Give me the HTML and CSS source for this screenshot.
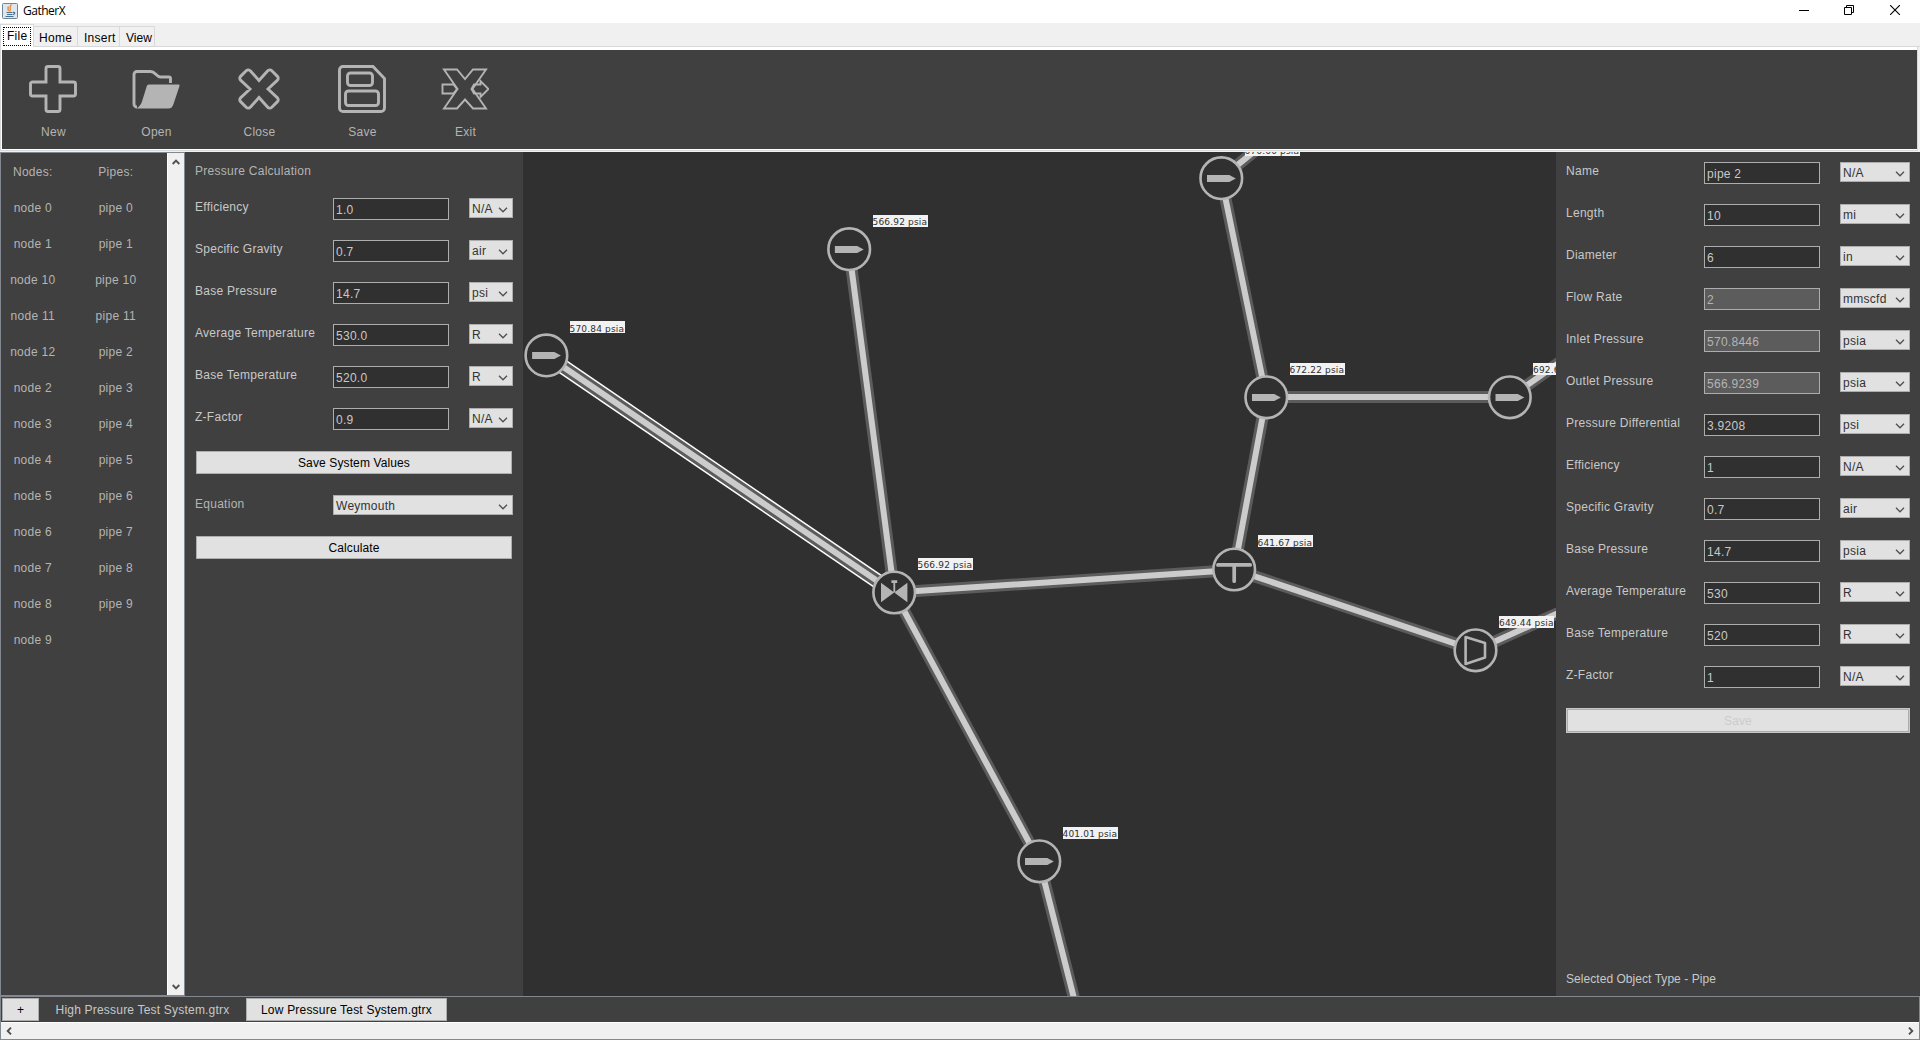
FILE: index.html
```html
<!DOCTYPE html>
<html lang="en">
<head>
<meta charset="utf-8">
<title>GatherX</title>
<link rel="stylesheet" href="styles.css">
</head>
<body>
<svg class="defs" width="0" height="0">
  <defs>
    <symbol id="chev" viewBox="0 0 10 6"><path d="M1 .8 5 4.8 9 .8" fill="none" stroke="#505050" stroke-width="1.3"/></symbol>
    <g id="source">
      <circle r="20.8" fill="#303030" stroke="#b4b4b4" stroke-width="2.6"/>
      <path d="M-14.3-3.3H8L14.5.2 8 3.7H-14.3Z" fill="#b4b4b4"/>
    </g>
  </defs>
</svg>
<header class="titlebar">
  <svg class="java" width="16" height="16" viewBox="0 0 16 16">
    <rect x=".5" y=".5" width="15" height="15" rx="1" fill="#dfe6ee" stroke="#6f8596"/>
    <path d="M9.5 1.5C6 4.500 10 5 7.500 8.500M6.500 3.500C5 5.500 7 6 6 8" fill="none" stroke="#e8852a" stroke-width="1.300"/>
    <path d="M4.500 9.500h6M5 11.500h5M3.500 13.500h8M11 9.500c2.500-.5 2 2-.5 2" fill="none" stroke="#49708f" stroke-width="1.200"/>
  </svg>
  <span class="app-name">GatherX</span>
  <div class="win-buttons">
    <svg width="10" height="10" viewBox="0 0 10 10"><path d="M0 5.500h10" stroke="#000"/></svg>
    <svg width="10" height="10" viewBox="0 0 10 10"><path d="M.5 2.500h7v7h-7zM2.500 2.500v-2h7v7h-2" fill="none" stroke="#000"/></svg>
    <svg class="close" width="10" height="10" viewBox="0 0 10 10"><path d="M0 0 10 10M10 0 0 10" stroke="#000" stroke-width="1.100"/></svg>
  </div>
</header>
<nav class="menu">
  <div class="tab active"><span>File</span></div>
  <div class="tab home">Home</div>
  <div class="tab insert">Insert</div>
  <div class="tab view">View</div>
</nav>
<section class="ribbon">
  <div class="tools">
    <div class="tool">
      <svg width="48" height="48" viewBox="0 0 48 48"><path d="M19 1.500h10a2 2 0 0 1 2 2V17h13.500a2 2 0 0 1 2 2v10a2 2 0 0 1-2 2H31v13.500a2 2 0 0 1-2 2H19a2 2 0 0 1-2-2V31H3.500a2 2 0 0 1-2-2V19a2 2 0 0 1 2-2H17V3.500a2 2 0 0 1 2-2Z"/></svg>
      <span>New</span>
    </div>
    <div class="tool">
      <svg width="48" height="48" viewBox="0 0 48 48"><path d="M38.500 18v-4.500a1.500 1.500 0 0 0-1.500-1.500H28.500C24 12 23.500 6.500 18.500 6.500H5a3 3 0 0 0-3 3V39a3 3 0 0 0 3 3"/><path class="solid" d="M17 19.500h29.500c.8 0 1.300.7 1 1.500L41.500 39c-1 3-2.500 4.500-5 4.500H4.500C7 42 9 39.500 10 36.500L14.500 22c.5-1.800 1.200-2.500 2.500-2.500Z"/></svg>
      <span>Open</span>
    </div>
    <div class="tool">
      <svg width="48" height="48" viewBox="0 0 48 48"><path d="M24 15.500 32.500 6c1.300-1.500 3-1.500 4.300-.3l5.400 5.400c1.400 1.400 1.400 3 0 4.300L33 24l9.200 8.600c1.400 1.300 1.400 2.900 0 4.300l-5.400 5.400c-1.300 1.200-3 1.200-4.300-.3L24 32.500 15.500 42c-1.300 1.500-3 1.500-4.300.3l-5.400-5.400c-1.400-1.400-1.400-3 0-4.300L15 24l-9.200-8.600c-1.400-1.300-1.400-2.900 0-4.300l5.400-5.400c1.300-1.200 3-1.200 4.300.3Z"/></svg>
      <span>Close</span>
    </div>
    <div class="tool">
      <svg width="48" height="48" viewBox="0 0 48 48"><path d="M5 1.500h30L46.500 13.500V43a3.500 3.500 0 0 1-3.500 3.500H5A3.500 3.500 0 0 1 1.500 43V5A3.500 3.500 0 0 1 5 1.500Z"/><rect x="9.500" y="8" width="25" height="12.500" rx="3"/><rect x="7.500" y="26" width="33" height="14.500" rx="3"/></svg>
      <span>Save</span>
    </div>
    <div class="tool">
      <svg class="thin" width="48" height="48" viewBox="0 0 48 48"><path d="M3 4.500H16L24 14 32 4.500H45L31.500 24 45 43.500H32L24 34.500 16 43.500H3L16.500 24Z"/><path d="M12.500 19.500H1.500v9h11l3.500-4.500Z"/><path d="M33 19.500h6.500v-3.500l8 8-8 8v-3.500H33L30.500 24Z"/></svg>
      <span>Exit</span>
    </div>
  </div>
</section>
<main class="work">
  <aside class="objects">
    <div class="lists">
      <div class="list nodes">
        <span>Nodes:</span><span>node 0</span><span>node 1</span><span>node 10</span><span>node 11</span><span>node 12</span><span>node 2</span><span>node 3</span><span>node 4</span><span>node 5</span><span>node 6</span><span>node 7</span><span>node 8</span><span>node 9</span>
      </div>
      <div class="list pipes">
        <span>Pipes:</span><span>pipe 0</span><span>pipe 1</span><span>pipe 10</span><span>pipe 11</span><span>pipe 2</span><span>pipe 3</span><span>pipe 4</span><span>pipe 5</span><span>pipe 6</span><span>pipe 7</span><span>pipe 8</span><span>pipe 9</span>
      </div>
    </div>
    <div class="vscroll">
      <svg width="8" height="6" viewBox="0 0 8 6"><path d="M.7 5 4 1.700 7.300 5" fill="none" stroke="#505050" stroke-width="1.900"/></svg>
      <svg width="8" height="6" viewBox="0 0 8 6"><path d="M.7 1 4 4.300 7.300 1" fill="none" stroke="#505050" stroke-width="1.900"/></svg>
    </div>
  </aside>
  <section class="calc">
    <h2>Pressure Calculation</h2>
    <div class="row"><label>Efficiency</label><div class="field">1.0</div><div class="select">N/A<svg><use href="#chev"/></svg></div></div>
    <div class="row"><label>Specific Gravity</label><div class="field">0.7</div><div class="select">air<svg><use href="#chev"/></svg></div></div>
    <div class="row"><label>Base Pressure</label><div class="field">14.7</div><div class="select">psi<svg><use href="#chev"/></svg></div></div>
    <div class="row"><label>Average Temperature</label><div class="field">530.0</div><div class="select">R<svg><use href="#chev"/></svg></div></div>
    <div class="row"><label>Base Temperature</label><div class="field">520.0</div><div class="select">R<svg><use href="#chev"/></svg></div></div>
    <div class="row"><label>Z-Factor</label><div class="field">0.9</div><div class="select">N/A<svg><use href="#chev"/></svg></div></div>
    <div class="button save-values">Save System Values</div>
    <div class="row equation"><label>Equation</label><div class="select">Weymouth<svg><use href="#chev"/></svg></div></div>
    <div class="button">Calculate</div>
  </section>
  <svg class="canvas" width="1033" height="844" viewBox="523 152 1033 844">
    <g>
      <path class="halo" d="M546.500 355.500 894.200 592.500"/>
      <g class="casing">
        <path id="network" d="M546.500 355.500 894.200 592.500M849 249.300 894.200 592.500M894.200 592.500 1234.200 570M894.200 592.500 1039.300 861.300M1039.300 861.300 1079.500 1020M1234.200 569.500 1266.300 397M1234.200 569.500 1475.500 650.300M1475.500 650.300 1596 596M1266.300 397 1221.300 178.200M1266 397H1510M1221.300 178.200 1293 120M1509.800 397.300 1610 327"/>
      </g>
      <use class="core" href="#network"/>
    </g>
    <use href="#source" x="546.400" y="355.400"/>
    <use href="#source" x="849.200" y="249.200"/>
    <use href="#source" x="1221.300" y="178.200"/>
    <use href="#source" x="1266.300" y="397.300"/>
    <use href="#source" x="1509.800" y="397.300"/>
    <use href="#source" x="1039.300" y="861.300"/>
    <g class="node" transform="translate(894.200 592.500)">
      <circle r="20.800"/>
      <path class="fill" d="M-13.200-9.700 0 0-13.200 9.700ZM13.200-9.700 0 0 13.200 9.700ZM-2.800-12.300H3v2.800H1V0H-.8V-9.500H-2.800Z"/>
    </g>
    <g class="node" transform="translate(1234.200 569.500)">
      <circle r="20.800"/>
      <path d="M-16.300-4.600H16M0-4.600V11.700" stroke-linecap="round" stroke-width="3.700"/>
    </g>
    <g class="node" transform="translate(1475.500 650.300)">
      <circle r="20.800"/>
      <path d="M-9.900-13.300 9.500-7.400V7.200L-9.900 13.700Z" stroke-linejoin="round"/>
    </g>
    <g class="tags">
      <rect x="570" y="321" width="55" height="12"/><text x="569.500" y="332" textLength="54.500">570.84 psia</text>
      <rect x="873" y="215" width="55" height="12"/><text x="872.500" y="225" textLength="54.500">566.92 psia</text>
      <rect x="918" y="558" width="55" height="12"/><text x="917.500" y="568" textLength="54.500">566.92 psia</text>
      <rect x="1245" y="144" width="55" height="12"/><text x="1244.500" y="154" textLength="54.500">676.60 psia</text>
      <rect x="1290" y="363" width="55" height="12"/><text x="1289.500" y="373" textLength="54.500">672.22 psia</text>
      <rect x="1533" y="363" width="55" height="12"/><text x="1533" y="373" textLength="54.500">692.60 psia</text>
      <rect x="1258" y="535" width="55" height="12"/><text x="1257.500" y="546" textLength="54.500">641.67 psia</text>
      <rect x="1499" y="616" width="55" height="12"/><text x="1499" y="626" textLength="54.500">649.44 psia</text>
      <rect x="1063" y="827" width="55" height="12"/><text x="1062.500" y="837" textLength="54.500">401.01 psia</text>
    </g>
  </svg>
  <aside class="props">
    <div class="row"><label>Name</label><div class="field">pipe 2</div><div class="select">N/A<svg><use href="#chev"/></svg></div></div>
    <div class="row"><label>Length</label><div class="field">10</div><div class="select">mi<svg><use href="#chev"/></svg></div></div>
    <div class="row"><label>Diameter</label><div class="field">6</div><div class="select">in<svg><use href="#chev"/></svg></div></div>
    <div class="row"><label>Flow Rate</label><div class="field off">2</div><div class="select">mmscfd<svg><use href="#chev"/></svg></div></div>
    <div class="row"><label>Inlet Pressure</label><div class="field off">570.8446</div><div class="select">psia<svg><use href="#chev"/></svg></div></div>
    <div class="row"><label>Outlet Pressure</label><div class="field off">566.9239</div><div class="select">psia<svg><use href="#chev"/></svg></div></div>
    <div class="row"><label>Pressure Differential</label><div class="field">3.9208</div><div class="select">psi<svg><use href="#chev"/></svg></div></div>
    <div class="row"><label>Efficiency</label><div class="field">1</div><div class="select">N/A<svg><use href="#chev"/></svg></div></div>
    <div class="row"><label>Specific Gravity</label><div class="field">0.7</div><div class="select">air<svg><use href="#chev"/></svg></div></div>
    <div class="row"><label>Base Pressure</label><div class="field">14.7</div><div class="select">psia<svg><use href="#chev"/></svg></div></div>
    <div class="row"><label>Average Temperature</label><div class="field">530</div><div class="select">R<svg><use href="#chev"/></svg></div></div>
    <div class="row"><label>Base Temperature</label><div class="field">520</div><div class="select">R<svg><use href="#chev"/></svg></div></div>
    <div class="row"><label>Z-Factor</label><div class="field">1</div><div class="select">N/A<svg><use href="#chev"/></svg></div></div>
    <div class="button disabled">Save</div>
    <p class="status">Selected Object Type - Pipe</p>
  </aside>
</main>
<footer class="files">
  <div class="file-tabs">
    <div class="button add">+</div>
    <div class="file">High Pressure Test System.gtrx</div>
    <div class="button open-file">Low Pressure Test System.gtrx</div>
  </div>
  <div class="hscroll">
    <svg width="6" height="8" viewBox="0 0 6 8"><path d="M5 .7 1.700 4 5 7.300" fill="none" stroke="#505050" stroke-width="1.900"/></svg>
    <svg width="6" height="8" viewBox="0 0 6 8"><path d="M1 .7 4.300 4 1 7.300" fill="none" stroke="#505050" stroke-width="1.900"/></svg>
  </div>
</footer>
</body>
</html>
```
FILE: styles.css
```css
* { box-sizing: border-box; }
body {
  margin: 0;
  width: 1920px;
  height: 1040px;
  overflow: hidden;
  display: flex;
  flex-direction: column;
  background: #f0f0f0;
  color: #000;
  font: 12px/14px "Liberation Sans", Arial, sans-serif;
  letter-spacing: .27px;
}
.defs { position: absolute; }
.titlebar { height: 23px; background: #fff; display: flex; padding: 3px 20px 0 2px; }
.app-name { margin: 1px 0 0 5px; font-family: "Open Sans", sans-serif; letter-spacing: -.5px; }
.win-buttons { margin-left: auto; display: flex; gap: 35px; padding: 2px 0 0; width: 101px; }
.close { margin-left: 1px; }

.menu { height: 24px; display: flex; align-items: flex-end; border-bottom: 1px solid #d9d9d9; padding-top: 1px; }
.tab { height: 20px; border: 1px solid #d9d9d9; border-left: 0; border-bottom: 0; padding-top: 4px; white-space: nowrap; }
.tab.active { width: 34px; height: 23px; margin-bottom: -1px; border-left: 1px solid #d9d9d9; background: #fff; padding: 2px; }
.tab.active span { display: block; height: 19px; padding: 1px 0 0 3px; border: 1px dotted #000; }
.home { width: 44px; padding-left: 5px; }
.insert { width: 42px; padding-left: 6px; }
.view { width: 35px; padding-left: 6px; letter-spacing: 0; }

.ribbon { width: 1918px; height: 104px; margin-bottom: 1px; padding: 3px 0 1px 1px; border: 1px solid #d9d9d9; border-top: 0; background: #fff; }
.tools { height: 99px; background: #404040; display: flex; }
.tool { width: 103px; padding-top: 15px; display: flex; flex-direction: column; align-items: center; color: #b4b4b4; }
.tool svg { margin-left: -1px; fill: none; stroke: #b4b4b4; stroke-width: 2.9; }
.tool .solid { fill: #b4b4b4; stroke: none; }
.tool .thin { stroke-width: 1.9; }
.tool span { margin-top: 12px; }

.work { height: 844px; display: flex; background: #404040; }
.objects { width: 185px; border: 1px solid #828790; display: flex; color: #b4b4b4; }
.lists { width: 166px; display: flex; padding-top: 12px; }
.list { display: flex; flex-direction: column; align-items: center; gap: 22px; }
.nodes { width: 64px; }
.pipes { width: 103px; }
.vscroll { width: 17px; background: #f0f0f0; border-left: 1px solid #fff; display: flex; flex-direction: column; align-items: center; justify-content: space-between; padding: 6px 0 5px; }

.calc { width: 338px; padding: 12px 10px 0; }
h2 { margin: 0 0 20px; font: inherit; color: #b4b4b4; }
.row { display: flex; height: 42px; color: #c8c8c8; }
.row label { width: 138px; padding-top: 2px; white-space: nowrap; }
.field { width: 116px; height: 22px; margin-right: 20px; border: 1px solid #adadad; background: #303030; padding: 4px 3px 0 2px; }
.field.off { background: #5c5c5c; color: #b4b4b4; }
.select { width: 44px; height: 20px; border: 1px solid #adadad; background: #e1e1e1; color: #333; display: flex; justify-content: space-between; padding: 3px 4px 0 2px; white-space: nowrap; }
.select svg { width: 10px; height: 6px; margin-top: 5px; flex: none; }
.button { height: 23px; border: 1px solid #adadad; background: #e1e1e1; text-align: center; padding-top: 4px; letter-spacing: .12px; }
.calc .button { margin: 0 1px; }
.calc .save-values { margin: 1px 1px 21px; }
.equation { height: 41px; }
.equation label { color: #b4b4b4; }
.equation .select { width: 180px; }

.canvas { background: #303030; display: block; flex: none; }
.canvas path, .core { fill: none; }
.halo { stroke: #fff; stroke-width: 15; }
.casing { stroke: #5c5c5c; stroke-width: 12; }
.core { stroke: #ccc; stroke-width: 6; }
.node circle { fill: #303030; }
.node { stroke: #b4b4b4; stroke-width: 2.6; }
.canvas .fill { fill: #b4b4b4; stroke: none; }
.tags rect { fill: #f2f2f2; }
.tags text { fill: #303030; font: 9px "DejaVu Sans", sans-serif; letter-spacing: 0; }

.props { width: 364px; padding: 10px 10px 0; display: flex; flex-direction: column; }
.props .select { width: 70px; }
.disabled { height: 25px; border: 1px solid #c8c8c8; box-shadow: inset 0 0 0 1px #adadad; color: #ccc; padding-top: 5px; }
.status { margin: auto 0 10px; color: #c8c8c8; letter-spacing: .05px; }

.files { height: 44px; border: 1px solid #828790; background: #404040; }
.file-tabs { height: 25px; display: flex; padding: 1px 1px 0; }
.add { width: 37px; }
.file { width: 207px; text-align: center; padding-top: 5px; color: #c8c8c8; letter-spacing: .2px; }
.open-file { width: 201px; letter-spacing: .2px; }
.hscroll { height: 17px; border-top: 1px solid #fff; background: #f0f0f0; display: flex; justify-content: space-between; align-items: center; padding: 0 5px; }
```
